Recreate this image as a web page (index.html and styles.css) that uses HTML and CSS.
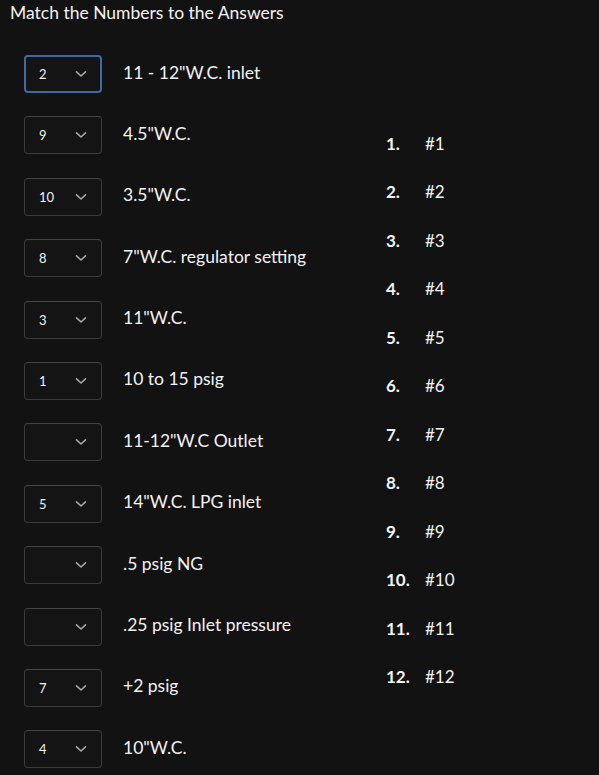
FILE: index.html
```html
<!DOCTYPE html>
<html>
<head>
<meta charset="utf-8">
<link rel="stylesheet" href="styles.css">
</head>
<body>
<div class="page">
  <h1 class="title">Match the Numbers to the Answers</h1>
  <div class="match">
    <div class="rows">
      <div class="row"><div class="sel focused"><span class="val">2</span><svg class="chev" viewBox="0 0 12 8"><path d="M1.5 1.8 6 6 10.5 1.8"/></svg></div><span class="label">11 - 12"W.C. inlet</span></div>
      <div class="row"><div class="sel"><span class="val">9</span><svg class="chev" viewBox="0 0 12 8"><path d="M1.5 1.8 6 6 10.5 1.8"/></svg></div><span class="label">4.5"W.C.</span></div>
      <div class="row"><div class="sel"><span class="val">10</span><svg class="chev" viewBox="0 0 12 8"><path d="M1.5 1.8 6 6 10.5 1.8"/></svg></div><span class="label">3.5"W.C.</span></div>
      <div class="row"><div class="sel"><span class="val">8</span><svg class="chev" viewBox="0 0 12 8"><path d="M1.5 1.8 6 6 10.5 1.8"/></svg></div><span class="label">7"W.C. regulator setting</span></div>
      <div class="row"><div class="sel"><span class="val">3</span><svg class="chev" viewBox="0 0 12 8"><path d="M1.5 1.8 6 6 10.5 1.8"/></svg></div><span class="label">11"W.C.</span></div>
      <div class="row"><div class="sel"><span class="val">1</span><svg class="chev" viewBox="0 0 12 8"><path d="M1.5 1.8 6 6 10.5 1.8"/></svg></div><span class="label">10 to 15 psig</span></div>
      <div class="row"><div class="sel"><span class="val"></span><svg class="chev" viewBox="0 0 12 8"><path d="M1.5 1.8 6 6 10.5 1.8"/></svg></div><span class="label">11-12"W.C Outlet</span></div>
      <div class="row"><div class="sel"><span class="val">5</span><svg class="chev" viewBox="0 0 12 8"><path d="M1.5 1.8 6 6 10.5 1.8"/></svg></div><span class="label">14"W.C. LPG inlet</span></div>
      <div class="row"><div class="sel"><span class="val"></span><svg class="chev" viewBox="0 0 12 8"><path d="M1.5 1.8 6 6 10.5 1.8"/></svg></div><span class="label">.5 psig NG</span></div>
      <div class="row"><div class="sel"><span class="val"></span><svg class="chev" viewBox="0 0 12 8"><path d="M1.5 1.8 6 6 10.5 1.8"/></svg></div><span class="label">.25 psig Inlet pressure</span></div>
      <div class="row"><div class="sel"><span class="val">7</span><svg class="chev" viewBox="0 0 12 8"><path d="M1.5 1.8 6 6 10.5 1.8"/></svg></div><span class="label">+2 psig</span></div>
      <div class="row"><div class="sel"><span class="val">4</span><svg class="chev" viewBox="0 0 12 8"><path d="M1.5 1.8 6 6 10.5 1.8"/></svg></div><span class="label">10"W.C.</span></div>
    </div>
    <ol class="answers">
      <li><span class="num">1.</span><span>#1</span></li>
      <li><span class="num">2.</span><span>#2</span></li>
      <li><span class="num">3.</span><span>#3</span></li>
      <li><span class="num">4.</span><span>#4</span></li>
      <li><span class="num">5.</span><span>#5</span></li>
      <li><span class="num">6.</span><span>#6</span></li>
      <li><span class="num">7.</span><span>#7</span></li>
      <li><span class="num">8.</span><span>#8</span></li>
      <li><span class="num">9.</span><span>#9</span></li>
      <li><span class="num">10.</span><span>#10</span></li>
      <li><span class="num">11.</span><span>#11</span></li>
      <li><span class="num">12.</span><span>#12</span></li>
    </ol>
  </div>
</div>
</body>
</html>
```

FILE: styles.css
```css
html, body {
  margin: 0;
  padding: 0;
  background: #121212;
}
body {
  font-family: Lato, "Open Sans", sans-serif;
  color: #f2f2f2;
}
.page {
  padding: 2px 0 0 10px;
}
.title {
  margin: 0;
  font-size: 17.5px;
  font-weight: 400;
  line-height: 22px;
}
.match {
  display: flex;
  align-items: center;
  margin-top: 31px;
}
.rows {
  display: flex;
  flex-direction: column;
  gap: 23.4px;
  margin-left: 14px;
  width: 362px;
}
.row {
  display: flex;
  align-items: center;
  height: 38px;
}
.sel {
  box-sizing: border-box;
  width: 78px;
  height: 38px;
  border: 1px solid #3b3b3b;
  border-top-color: #444;
  border-radius: 4px;
  background: #141414;
  display: flex;
  align-items: center;
  padding-left: 14px;
  padding-right: 14px;
}
.sel.focused {
  border: 2px solid #3d6aa0;
  padding-left: 13px;
  padding-right: 13px;
}
.val {
  flex: 1;
  font-size: 13px;
  color: #f2f2f2;
}
.chev {
  width: 12px;
  height: 8px;
  fill: none;
  stroke: #a8a8a8;
  stroke-width: 1.6;
  stroke-linecap: round;
  stroke-linejoin: round;
}
.label {
  margin-left: 21px;
  font-size: 17.5px;
  line-height: 22px;
  padding-bottom: 3px;
}
.answers {
  list-style: none;
  margin: 0;
  padding: 0 0 2px 0;
  display: flex;
  flex-direction: column;
  gap: 24.5px;
}
.answers li {
  display: flex;
  font-size: 17px;
  line-height: 24px;
}
.num {
  font-weight: 700;
  width: 39px;
}
```
